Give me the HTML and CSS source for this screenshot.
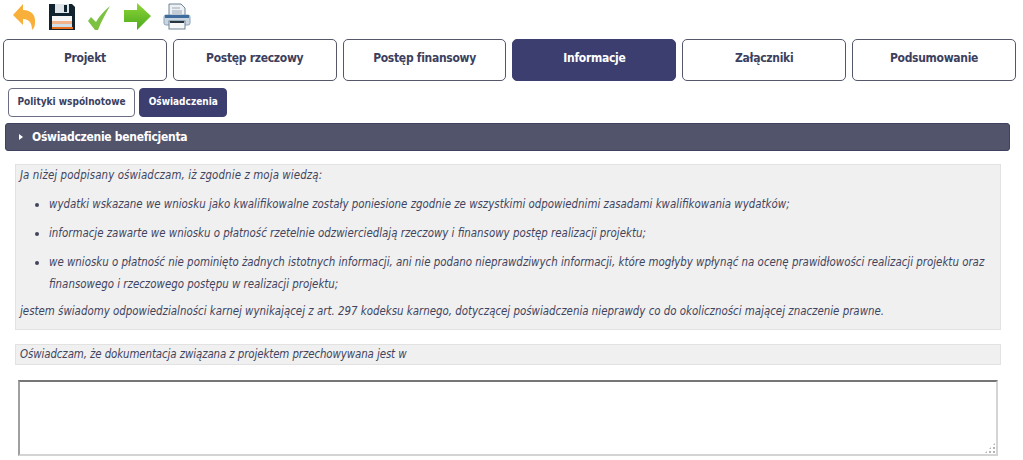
FILE: index.html
```html
<!DOCTYPE html>
<html lang="pl">

<head>
  <meta charset="UTF-8">
  <title>Informacje</title>
  <link rel="stylesheet" href="styles.css">
</head>

<body>
  <div class="toolbar">
    <svg class="icon" width="25" height="30" viewBox="0 0 25 30">
      <path d="M1 14 L11 3 L11 9 C19 9 24 14 23 22 C23 25 22 27 20 29 C20 23 18 18 11 18 L11 24 Z" fill="#f8b03a"/>
    </svg>
    <svg class="icon" width="28" height="30" viewBox="0 0 28 30">
      <path d="M1 3 H24 L27 6 V29 H1 Z" fill="#10232f"/>
      <rect x="7" y="3" width="14" height="9" fill="#dfe4e8"/>
      <rect x="16" y="4" width="3" height="7" fill="#10232f"/>
      <rect x="4" y="15" width="20" height="5" fill="#f6f6f6"/>
      <rect x="4" y="20" width="20" height="3" fill="#f3b48c"/>
      <rect x="4" y="23" width="20" height="3" fill="#cfe0ea"/>
      <rect x="4" y="26" width="21" height="2" fill="#e8701e"/>
    </svg>
    <svg class="icon" width="25" height="30" viewBox="0 0 25 30">
      <path d="M1 20 L4 16 L9 21 C13 14 18 9 23 5 C19 12 14 21 11 29 L8 29 Z" fill="#7cc142"/>
    </svg>
    <svg class="icon" width="29" height="30" viewBox="0 0 29 30">
      <defs>
        <linearGradient id="arrowFill" x1="0" y1="0" x2="0" y2="1">
          <stop offset="0" stop-color="#8fd638"/>
          <stop offset="1" stop-color="#4aa81e"/>
        </linearGradient>
      </defs>
      <path d="M1 9 H14 V2 L28 15 L14 29 V21 H1 Z" fill="url(#arrowFill)"/>
    </svg>
    <svg class="icon" width="28" height="30" viewBox="0 0 28 30">
      <path d="M6 3 H18 L22 7 V15 H6 Z" fill="#eef1f4" stroke="#6f8296"/>
      <path d="M9 7 H17 M9 10 H19 M9 12 H19" stroke="#9aa8b6"/>
      <rect x="1" y="14" width="26" height="10" rx="2" fill="#c9d6e2" stroke="#8ea2b6"/>
      <rect x="2" y="14" width="24" height="3" fill="#3f6c9c"/>
      <rect x="6" y="20" width="16" height="8" fill="#f6f7f8" stroke="#6f8296"/>
      <rect x="7" y="20" width="14" height="2" fill="#27333f"/>
    </svg>
  </div>

  <div class="tabs">
    <a class="tab">Projekt</a>
    <a class="tab">Postęp rzeczowy</a>
    <a class="tab">Postęp finansowy</a>
    <a class="tab current">Informacje</a>
    <a class="tab">Załączniki</a>
    <a class="tab">Podsumowanie</a>
  </div>

  <div class="subtabs">
    <a class="subtab">Polityki wspólnotowe</a>
    <a class="subtab current">Oświadczenia</a>
  </div>

  <div class="bar"><span class="arrow"></span>Oświadczenie beneficjenta</div>

  <div class="note statement">
    <p class="lead">Ja niżej podpisany oświadczam, iż zgodnie z moja wiedzą:</p>
    <ul>
      <li>wydatki wskazane we wniosku jako kwalifikowalne zostały poniesione zgodnie ze wszystkimi odpowiednimi zasadami kwalifikowania wydatków;</li>
      <li>informacje zawarte we wniosku o płatność rzetelnie odzwierciedlają rzeczowy i finansowy postęp realizacji projektu;</li>
      <li>we wniosku o płatność nie pominięto żadnych istotnych informacji, ani nie podano nieprawdziwych informacji, które mogłyby wpłynąć na ocenę prawidłowości realizacji projektu oraz finansowego i rzeczowego postępu w realizacji projektu;</li>
    </ul>
    <p>jestem świadomy odpowiedzialności karnej wynikającej z art. 297 kodeksu karnego, dotyczącej poświadczenia nieprawdy co do okoliczności mającej znaczenie prawne.</p>
  </div>

  <div class="note storage">
    <p>Oświadczam, że dokumentacja związana z projektem przechowywana jest w</p>
  </div>

  <div class="answer">
    <textarea></textarea>
    <span class="grip"></span>
  </div>
</body>

</html>
```

FILE: styles.css
```css
* {
  margin: 0;
  padding: 0;
  box-sizing: border-box;
}

html,
body {
  height: 460px;
  overflow: hidden;
}

body {
  background-color: #fff;
  font-family: "DejaVu Sans Condensed", "DejaVu Sans", sans-serif;
  color: #3a3f5c;
}

.toolbar {
  display: flex;
  gap: 11px;
  height: 39px;
  padding: 1px 0 0 12px;
}

.icon {
  display: block;
}

.tabs {
  display: flex;
  gap: 6px;
  padding: 0 7px 0 3px;
}

.tab {
  flex: 1;
  height: 42px;
  border: 1px solid #55586a;
  border-radius: 5px;
  background-color: #fff;
  text-align: center;
  line-height: 36px;
  font-size: 12px;
  font-weight: bold;
  letter-spacing: -0.3px;
  color: #3c3f5e;
}

.tab.current {
  background-color: #3b3e6e;
  border-color: #3b3e6e;
  color: #fff;
}

.subtabs {
  display: flex;
  gap: 4px;
  padding: 7px 0 0 8px;
}

.subtab {
  height: 29px;
  padding: 0 8.5px;
  border: 1px solid #6b6e82;
  border-radius: 4px;
  line-height: 26px;
  font-size: 10px;
  font-weight: bold;
  color: #3c3f5e;
}

.subtab.current {
  background-color: #3b3e6e;
  border-color: #3b3e6e;
  color: #fff;
}

.bar {
  display: flex;
  align-items: center;
  height: 28px;
  margin: 6px 13px 0 5px;
  padding-left: 13px;
  background-color: #52546c;
  border: 1px solid #3f4160;
  border-radius: 3px;
  font-size: 12px;
  font-weight: bold;
  letter-spacing: -0.3px;
  color: #fff;
}

.arrow {
  width: 0;
  height: 0;
  margin-right: 9px;
  border-left: 4px solid #fff;
  border-top: 3px solid transparent;
  border-bottom: 3px solid transparent;
}

.note {
  margin: 0 22px 0 15px;
  padding: 0 4px;
  background-color: #f0f0f0;
  border: 1px solid #e2e2e2;
  font-size: 11.4px;
  font-style: italic;
  color: #41445e;
}

.statement {
  height: 166px;
  margin-top: 13px;
  padding-top: 1px;
  line-height: 18px;
}

.lead {
  letter-spacing: 0.1px;
}

.statement ul {
  margin-top: 9px;
  padding-left: 29px;
}

.statement li {
  margin-bottom: 7px;
  line-height: 22px;
}

.storage {
  height: 21px;
  margin-top: 14px;
  line-height: 19px;
  letter-spacing: -0.1px;
}

.answer {
  position: relative;
  width: 980px;
  height: 76px;
  margin: 15px 0 0 18px;
}

.answer textarea {
  display: block;
  width: 100%;
  height: 100%;
  resize: none;
  background-color: #fff;
  border: 2px solid #d4d4d4;
  border-top-color: #767676;
  border-left-color: #a0a0a0;
}

.grip {
  position: absolute;
  right: 2px;
  bottom: 2px;
  width: 12px;
  height: 12px;
  background-image: radial-gradient(circle, #b5b5b5 1px, transparent 1.2px);
  background-size: 4px 4px;
  clip-path: polygon(100% 0, 100% 100%, 0 100%);
}
```
